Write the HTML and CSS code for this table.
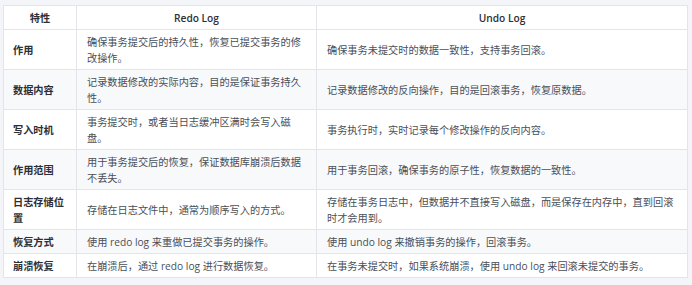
FILE: index.html
```html
<!DOCTYPE html>
<html lang="zh-CN">
<head>
<meta charset="utf-8">
<link rel="stylesheet" href="styles.css">
</head>
<body>
<div class="page">
<table class="cmp">
  <colgroup>
    <col class="c1"><col class="c2"><col class="c3">
  </colgroup>
  <thead>
    <tr><th>特性</th><th>Redo Log</th><th>Undo Log</th></tr>
  </thead>
  <tbody>
    <tr><td class="key">作用</td><td>确保事务提交后的持久性，恢复已提交事务的修改操作。</td><td>确保事务未提交时的数据一致性，支持事务回滚。</td></tr>
    <tr><td class="key">数据内容</td><td>记录数据修改的实际内容，目的是保证事务持久性。</td><td>记录数据修改的反向操作，目的是回滚事务，恢复原数据。</td></tr>
    <tr><td class="key">写入时机</td><td>事务提交时，或者当日志缓冲区满时会写入磁盘。</td><td>事务执行时，实时记录每个修改操作的反向内容。</td></tr>
    <tr><td class="key">作用范围</td><td>用于事务提交后的恢复，保证数据库崩溃后数据不丢失。</td><td>用于事务回滚，确保事务的原子性，恢复数据的一致性。</td></tr>
    <tr><td class="key">日志存储位置</td><td>存储在日志文件中，通常为顺序写入的方式。</td><td>存储在事务日志中，但数据并不直接写入磁盘，而是保存在内存中，直到回滚时才会用到。</td></tr>
    <tr><td class="key">恢复方式</td><td>使用 redo log 来重做已提交事务的操作。</td><td>使用 undo log 来撤销事务的操作，回滚事务。</td></tr>
    <tr><td class="key">崩溃恢复</td><td>在崩溃后，通过 redo log 进行数据恢复。</td><td>在事务未提交时，如果系统崩溃，使用 undo log 来回滚未提交的事务。</td></tr>
  </tbody>
</table>
</div>
</body>
</html>
```
FILE: styles.css
```css
html, body {
  margin: 0;
  padding: 0;
  background: #f4f5f8;
}
.page {
  padding: 5px 5px 0 3px;
}
.cmp {
  width: 684px;
  border-collapse: collapse;
  table-layout: fixed;
  background: #ffffff;
  font-family: "Open Sans", "Noto Sans CJK SC", sans-serif;
  font-size: 10.2px;
  line-height: 16px;
  color: #4a4f58;
}
.c1 { width: 73px; }
.c2 { width: 240px; }
.c3 { width: 371px; }
.cmp th, .cmp td {
  border: 1px solid #e3e5ea;
  padding: 3.5px 10px;
  vertical-align: middle;
  text-align: left;
}
.cmp th {
  text-align: center;
  font-weight: 600;
  color: #2b2f36;
}
.cmp td.key {
  font-weight: 700;
  color: #2b2f36;
  padding-left: 9px;
  padding-right: 9px;
}
.cmp tbody tr:nth-child(even) td {
  background: #f8f9fb;
}
```
